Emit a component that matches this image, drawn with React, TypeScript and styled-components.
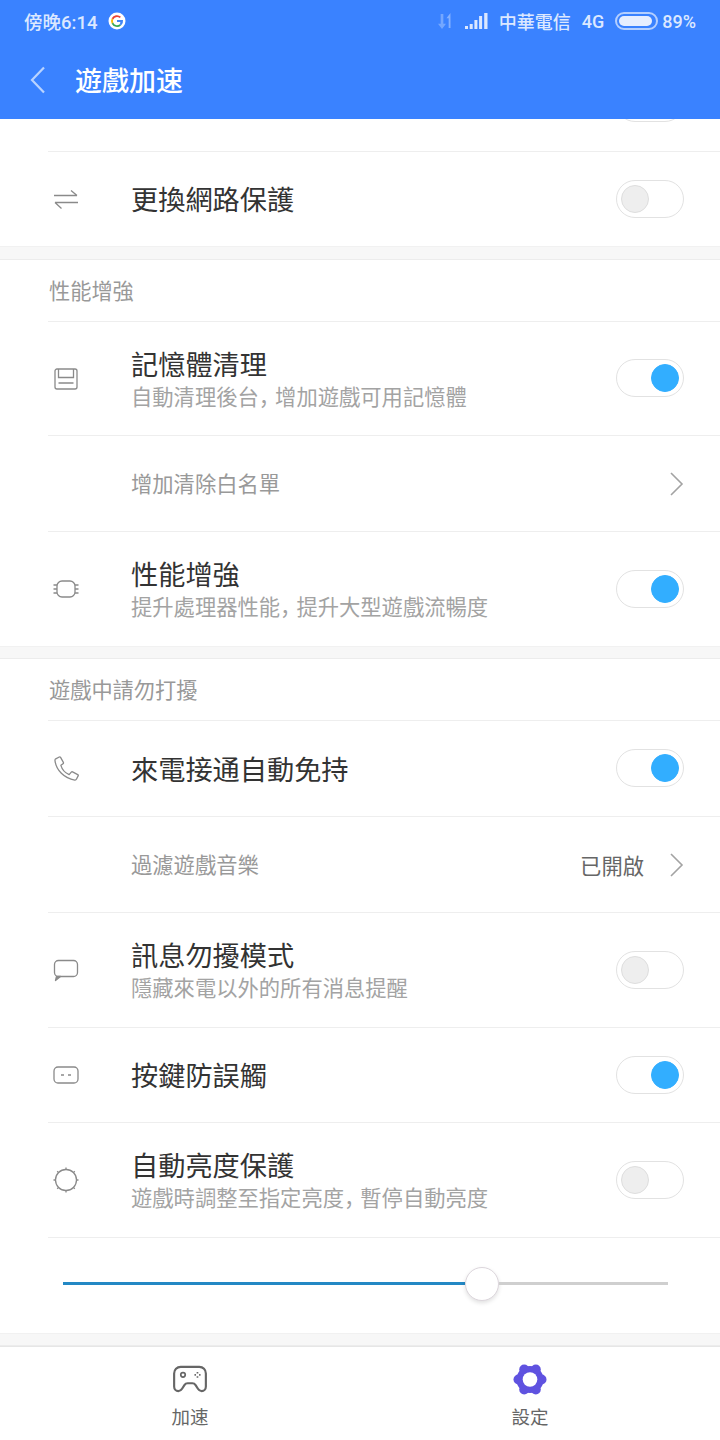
import React from 'react';
import styled, { createGlobalStyle } from 'styled-components';

const GlobalStyle = createGlobalStyle`
  html, body {
    margin: 0;
    padding: 0;
    background: #fff;
  }
  body {
    font-family: Roboto, "Noto Sans CJK SC", "Noto Sans CJK TC", sans-serif;
  }
`;

const GRAY_ICON = '#8a8a8a';

const SwapIcon = () => (
  <svg width="28" height="24" viewBox="0 0 28 24" fill="none" stroke={GRAY_ICON} strokeWidth="1.3">
    <path d="M2 8.500h23M19 3.500 25 8.500" />
    <path d="M26 15.500H3M9.500 21.500 3 15.500" />
  </svg>
);

const MemoryIcon = () => (
  <svg width="28" height="24" viewBox="0 0 28 24" fill="none" stroke={GRAY_ICON} strokeWidth="1.3">
    <rect x="3" y="2" width="22" height="20" rx="2" />
    <path d="M6.500 2v8.500h15V2M6.500 16h15" />
  </svg>
);

const ChipIcon = () => (
  <svg width="28" height="24" viewBox="0 0 28 24" fill="none" stroke={GRAY_ICON} strokeWidth="1.3">
    <rect x="5" y="4" width="18" height="16" rx="5" />
    <path d="M1.500 8H5M1.500 12H5M1.500 16H5M23 8h3.500M23 12h3.500M23 16h3.500" />
  </svg>
);

const PhoneIcon = () => (
  <svg width="30" height="28" viewBox="0 0 28 26" fill="none" stroke={GRAY_ICON} strokeWidth="1.2" strokeLinejoin="round">
    <path d="M3.500 3.500 6.800 1.800c.5-.2 1 0 1.200.4l2.600 4.600c.2.400.1.900-.3 1.200L8.300 9.600c1 3.600 4 7 7.700 8.600l2-2.300c.3-.3.800-.4 1.200-.2l4.800 2.500c.4.200.6.800.4 1.200l-1.500 3c-.3.600-1 1-1.700.9C11.500 21.800 3.800 14 2.800 5.200c-.1-.700.200-1.400.700-1.700Z" />
  </svg>
);

const BubbleIcon = () => (
  <svg width="28" height="24" viewBox="0 0 28 24" fill="none" stroke={GRAY_ICON} strokeWidth="1.3" strokeLinejoin="round">
    <rect x="2.500" y="2.500" width="23" height="16" rx="4" />
    <path d="M4.500 18.500 3.500 22.500 8.500 18.500Z" fill={GRAY_ICON} />
  </svg>
);

const KeyIcon = () => (
  <svg width="28" height="24" viewBox="0 0 28 24" fill="none" stroke={GRAY_ICON} strokeWidth="1.3">
    <rect x="2" y="4" width="24" height="16" rx="4" />
    <path d="M9 12h3M16 12h3" strokeWidth="1.600" />
  </svg>
);

const BrightnessIcon = () => (
  <svg width="28" height="28" viewBox="0 0 28 28" fill="none" stroke={GRAY_ICON} strokeWidth="1.3">
    <circle cx="14" cy="14" r="10.500" />
    <path d="M14 1.500v2.500M14 24v2.500M1.500 14H4M24 14h2.500M5.200 5.200l1.700 1.700M21.100 21.100l1.700 1.700M22.800 5.200l-1.700 1.700M6.900 21.100l-1.700 1.700" />
  </svg>
);

const GoogleBadge = () => (
  <svg width="18" height="18" viewBox="0 0 18 18">
    <circle cx="9" cy="9" r="8.500" fill="#fff" />
    <path d="M9 5a4 4 0 0 1 2.700 1l1.300-1.300A6 6 0 0 0 3.700 6.300L5.200 7.500A4 4 0 0 1 9 5Z" fill="#ea4335" />
    <path d="M3.700 6.300a6 6 0 0 0 0 5.400l1.500-1.200a4 4 0 0 1 0-3l-1.500-1.200Z" fill="#fbbc05" />
    <path d="M5.200 10.500l-1.500 1.200A6 6 0 0 0 13 13.400l-1.400-1.100A4 4 0 0 1 5.200 10.500Z" fill="#34a853" />
    <path d="M15 8H9v2h3.300a3 3 0 0 1-.7 2.300l1.400 1.100A6 6 0 0 0 15 8Z" fill="#4285f4" />
  </svg>
);

const DataArrows = () => (
  <svg width="16" height="18" viewBox="0 0 18 20" fill="#8db6ff">
    <path d="M3 2h3v11h3l-4.500 6L0 13h3Z" opacity="0.7" />
    <path d="M12 18V7H9.500L14 1l.1 17Z" opacity="0.9" />
  </svg>
);

const SignalBars = () => (
  <svg width="23" height="16" viewBox="0 0 23 16" fill="#dce8ff">
    <rect x="0" y="13" width="3" height="3" />
    <rect x="4.700" y="11" width="3" height="5" />
    <rect x="9.400" y="7" width="3" height="9" />
    <rect x="14.100" y="3" width="3" height="13" />
    <rect x="19.200" y="0" width="3.300" height="16" />
  </svg>
);

const BackChevron = () => (
  <svg width="18" height="28" viewBox="0 0 18 28" fill="none" stroke="#b9d3ff" strokeWidth="2.200">
    <path d="M15 1.500 3 14l12 12.500" />
  </svg>
);

const RowChevron = () => (
  <svg width="16" height="26" viewBox="0 0 16 26" fill="none" stroke="#a3a3a3" strokeWidth="1.600">
    <path d="M3 2l11 11L3 24" />
  </svg>
);

const GamepadIcon = () => (
  <svg width="36" height="28" viewBox="0 0 38 30" fill="none" stroke="#666" strokeWidth="2.300" strokeLinejoin="round">
    <path d="M9 2h20c4 0 7 3 7 7v14c0 3-2 5-4.500 5-1.800 0-3-.800-4-2.500l-2.500-4c-.800-1.300-1.800-2-3.500-2h-5c-1.700 0-2.700.700-3.500 2l-2.500 4c-1 1.700-2.200 2.500-4 2.500C4 28 2 26 2 23V9c0-4 3-7 7-7Z" />
    <circle cx="11.500" cy="10.500" r="2.400" strokeWidth="1.800" />
    <path d="M27 7.500v1.600M27 12v1.600M23.800 10.500h1.600M28.700 10.500h1.600" strokeWidth="1.800" />
  </svg>
);

const SettingsFlower = () => (
  <svg width="34" height="31" viewBox="0 0 34 31">
    <g fill="#5f52e0">
      <circle cx="17" cy="15.500" r="13.600" />
      <circle cx="28.500" cy="15.500" r="5" />
      <circle cx="22.800" cy="5.500" r="5" />
      <circle cx="11.200" cy="5.500" r="5" />
      <circle cx="5.500" cy="15.500" r="5" />
      <circle cx="11.200" cy="25.500" r="5" />
      <circle cx="22.800" cy="25.500" r="5" />
    </g>
    <circle cx="17" cy="15.500" r="7.300" fill="#fff" />
  </svg>
);

interface Item {
  id: string;
  title: string;
  subtitle?: string;
  small?: boolean;
  icon?: React.ReactNode;
  toggle?: boolean;
  value?: string;
  height: number;
  last?: boolean;
}

const performance: Item[] = [
  { id: 'mem', title: '記憶體清理', subtitle: '自動清理後台，增加遊戲可用記憶體', icon: <MemoryIcon />, toggle: true, height: 114 },
  { id: 'white', title: '增加清除白名單', small: true, height: 96 },
  { id: 'boost', title: '性能增強', subtitle: '提升處理器性能，提升大型遊戲流暢度', icon: <ChipIcon />, toggle: true, height: 114, last: true },
];

const dnd: Item[] = [
  { id: 'call', title: '來電接通自動免持', icon: <PhoneIcon />, toggle: true, height: 96 },
  { id: 'music', title: '過濾遊戲音樂', small: true, value: '已開啟', height: 96 },
  { id: 'msg', title: '訊息勿擾模式', subtitle: '隱藏來電以外的所有消息提醒', icon: <BubbleIcon />, toggle: false, height: 115 },
  { id: 'key', title: '按鍵防誤觸', icon: <KeyIcon />, toggle: true, height: 95 },
  { id: 'light', title: '自動亮度保護', subtitle: '遊戲時調整至指定亮度，暫停自動亮度', icon: <BrightnessIcon />, toggle: false, height: 115 },
];

// the comma is set tighter than a full CJK cell in the reference
const withTightComma = (text: string) => {
  const [head, tail] = text.split('，');
  if (tail === undefined) return text;
  return (
    <>
      {head}
      <Comma>，</Comma>
      {tail}
    </>
  );
};

const SettingRow = ({ item }: { item: Item }) => (
  <Row $height={item.height} $last={item.last}>
    <IconCell>{item.icon}</IconCell>
    <TextCell>
      {item.small ? <SmallTitle>{item.title}</SmallTitle> : <Title>{item.title}</Title>}
      {item.subtitle && <Subtitle>{withTightComma(item.subtitle)}</Subtitle>}
    </TextCell>
    {item.toggle !== undefined && <Toggle $on={item.toggle} />}
    {item.small && (
      <Trailing>
        {item.value && <ValueText>{item.value}</ValueText>}
        <RowChevron />
      </Trailing>
    )}
  </Row>
);

export default function App() {
  return (
    <Page>
      <GlobalStyle />
      <Header>
        <StatusBar>
          <StatusGroup>
            <TimeText>傍晚6:14</TimeText>
            <GoogleBadge />
          </StatusGroup>
          <StatusGroup>
            <DataArrows />
            <SignalBars />
            <StatusText>中華電信</StatusText>
            <StatusText>4G</StatusText>
            <Battery>
              <BatteryFill />
            </Battery>
            <StatusText>89%</StatusText>
          </StatusGroup>
        </StatusBar>
        <TitleBar>
          <BackChevron />
          <HeaderTitle>遊戲加速</HeaderTitle>
        </TitleBar>
      </Header>

      <Scroller>
        <ClippedRow>
          <Toggle $on={false} />
        </ClippedRow>
        <Row $height={94} $last>
          <IconCell>
            <SwapIcon />
          </IconCell>
          <TextCell>
            <Title>更換網路保護</Title>
          </TextCell>
          <Toggle $on={false} />
        </Row>
        <Gap $height={14} />

        <SectionHead>性能增強</SectionHead>
        {performance.map((item) => (
          <SettingRow key={item.id} item={item} />
        ))}
        <Gap $height={13} />

        <SectionHead>遊戲中請勿打擾</SectionHead>
        {dnd.map((item) => (
          <SettingRow key={item.id} item={item} />
        ))}

        <SliderRow>
          <SliderFill />
          <SliderKnob />
          <SliderRest />
        </SliderRow>
        <Gap $height={13} />
      </Scroller>

      <TabBar>
        <Tab>
          <TabIcon>
            <GamepadIcon />
          </TabIcon>
          <TabLabel>加速</TabLabel>
        </Tab>
        <Tab>
          <TabIcon>
            <SettingsFlower />
          </TabIcon>
          <TabLabel>設定</TabLabel>
        </Tab>
      </TabBar>
    </Page>
  );
}

const Page = styled.div`
  width: 720px;
  height: 1440px;
  display: flex;
  flex-direction: column;
  overflow: hidden;
  background: #fff;
`;

const Header = styled.header`
  height: 119px;
  flex: none;
  background: #3a82ff;
`;

const StatusBar = styled.div`
  height: 42px;
  padding: 0 24px;
  display: flex;
  align-items: center;
  justify-content: space-between;
`;

const StatusGroup = styled.div`
  display: flex;
  align-items: center;
  gap: 11px;
`;

const StatusText = styled.span`
  font-size: 18px;
  font-weight: 500;
  color: #dce8ff;
`;

const TimeText = styled(StatusText)`
  font-size: 18.5px;
`;

const Battery = styled.div`
  width: 43px;
  height: 18px;
  margin-right: -7px;
  box-sizing: border-box;
  padding: 2px;
  border: 2px solid #b4cfff;
  border-radius: 9px;
`;

const BatteryFill = styled.div`
  width: 94%;
  height: 100%;
  background: #e6eeff;
  border-radius: 5px;
`;

const TitleBar = styled.div`
  height: 75px;
  padding: 0 0 0 29px;
  display: flex;
  align-items: center;
  gap: 28px;
`;

const HeaderTitle = styled.h1`
  margin: 0;
  font-size: 27px;
  font-weight: 500;
  color: #fff;
`;

const Scroller = styled.main`
  flex: 1;
  min-height: 0;
  overflow: hidden;
`;

const ClippedRow = styled.div`
  height: 96px;
  margin: -63px 0 0 48px;
  padding-right: 36px;
  box-sizing: border-box;
  display: flex;
  align-items: center;
  justify-content: flex-end;
  border-bottom: 1px solid #eeeeee;
`;

const Row = styled.div<{ $height: number; $last?: boolean }>`
  height: ${({ $height }) => $height}px;
  margin-left: 48px;
  padding-right: 36px;
  box-sizing: border-box;
  display: flex;
  align-items: center;
  border-bottom: ${({ $last }) => ($last ? 'none' : '1px solid #eeeeee')};
`;

const IconCell = styled.div`
  width: 83px;
  flex: none;
  padding-left: 4px;
  box-sizing: border-box;
  display: flex;
  align-items: center;
`;

const TextCell = styled.div`
  flex: 1;
  min-width: 0;
`;

const Title = styled.div`
  padding-top: 4px;
  font-size: 27.2px;
  line-height: 34px;
  color: #333;
`;

const SmallTitle = styled.div`
  padding-top: 2px;
  font-size: 21.3px;
  line-height: 30px;
  color: #999;
`;

const Subtitle = styled.div`
  font-size: 21.3px;
  line-height: 30px;
  color: #a3a3a3;
`;

const Comma = styled.span`
  letter-spacing: -5px;
`;

const Trailing = styled.div`
  display: flex;
  align-items: center;
  gap: 24px;
`;

const ValueText = styled.span`
  font-size: 21.3px;
  color: #666;
`;

const Toggle = styled.div<{ $on: boolean }>`
  width: 68px;
  height: 38px;
  flex: none;
  margin-bottom: 1px;
  box-sizing: border-box;
  padding: 0 4px;
  border: 1px solid #e2e2e2;
  border-radius: 19px;
  background: #fff;
  display: flex;
  align-items: center;
  justify-content: ${({ $on }) => ($on ? 'flex-end' : 'flex-start')};

  &::after {
    content: '';
    width: 28px;
    height: 28px;
    box-sizing: border-box;
    border-radius: 50%;
    background: ${({ $on }) => ($on ? '#32aeff' : '#eeeeee')};
    border: 1px solid ${({ $on }) => ($on ? '#32aeff' : '#dedede')};
  }
`;

const Gap = styled.div<{ $height: number }>`
  height: ${({ $height }) => $height}px;
  box-sizing: border-box;
  background: #f7f7f7;
  border-top: 1px solid #f1f1f1;
  border-bottom: 1px solid #ececec;
`;

const SectionHead = styled.div`
  height: 62px;
  margin-left: 49px;
  padding-bottom: 4px;
  box-sizing: border-box;
  display: flex;
  align-items: center;
  font-size: 21.2px;
  color: #999;
  position: relative;

  &::after {
    content: '';
    position: absolute;
    left: -1px;
    right: 0;
    bottom: 0;
    height: 1px;
    background: #eeeeee;
  }
`;

const SliderRow = styled.div`
  height: 95px;
  box-sizing: border-box;
  padding: 0 52px 4px 63px;
  display: flex;
  align-items: center;
`;

const SliderFill = styled.div`
  width: 402px;
  height: 3px;
  background: #2388c4;
`;

const SliderKnob = styled.div`
  width: 34px;
  height: 34px;
  flex: none;
  box-sizing: border-box;
  border-radius: 50%;
  background: #fff;
  border: 1px solid #dcd6dc;
  box-shadow: 0 2px 4px rgba(0, 0, 0, 0.12);
`;

const SliderRest = styled.div`
  flex: 1;
  height: 3px;
  background: #cfcfcf;
`;

const TabBar = styled.nav`
  height: 94px;
  flex: none;
  background: #fff;
  border-top: 1px solid #e6e6e6;
  box-sizing: border-box;
  display: grid;
  grid-template-columns: 1fr 1fr;
  padding: 0 20px;
`;

const Tab = styled.div`
  display: flex;
  flex-direction: column;
  align-items: center;
  padding-top: 15px;
`;

const TabIcon = styled.div`
  height: 34px;
  display: flex;
  align-items: center;
`;

const TabLabel = styled.div`
  margin-top: 9px;
  font-size: 18.5px;
  line-height: 26px;
  color: #666;
`;
